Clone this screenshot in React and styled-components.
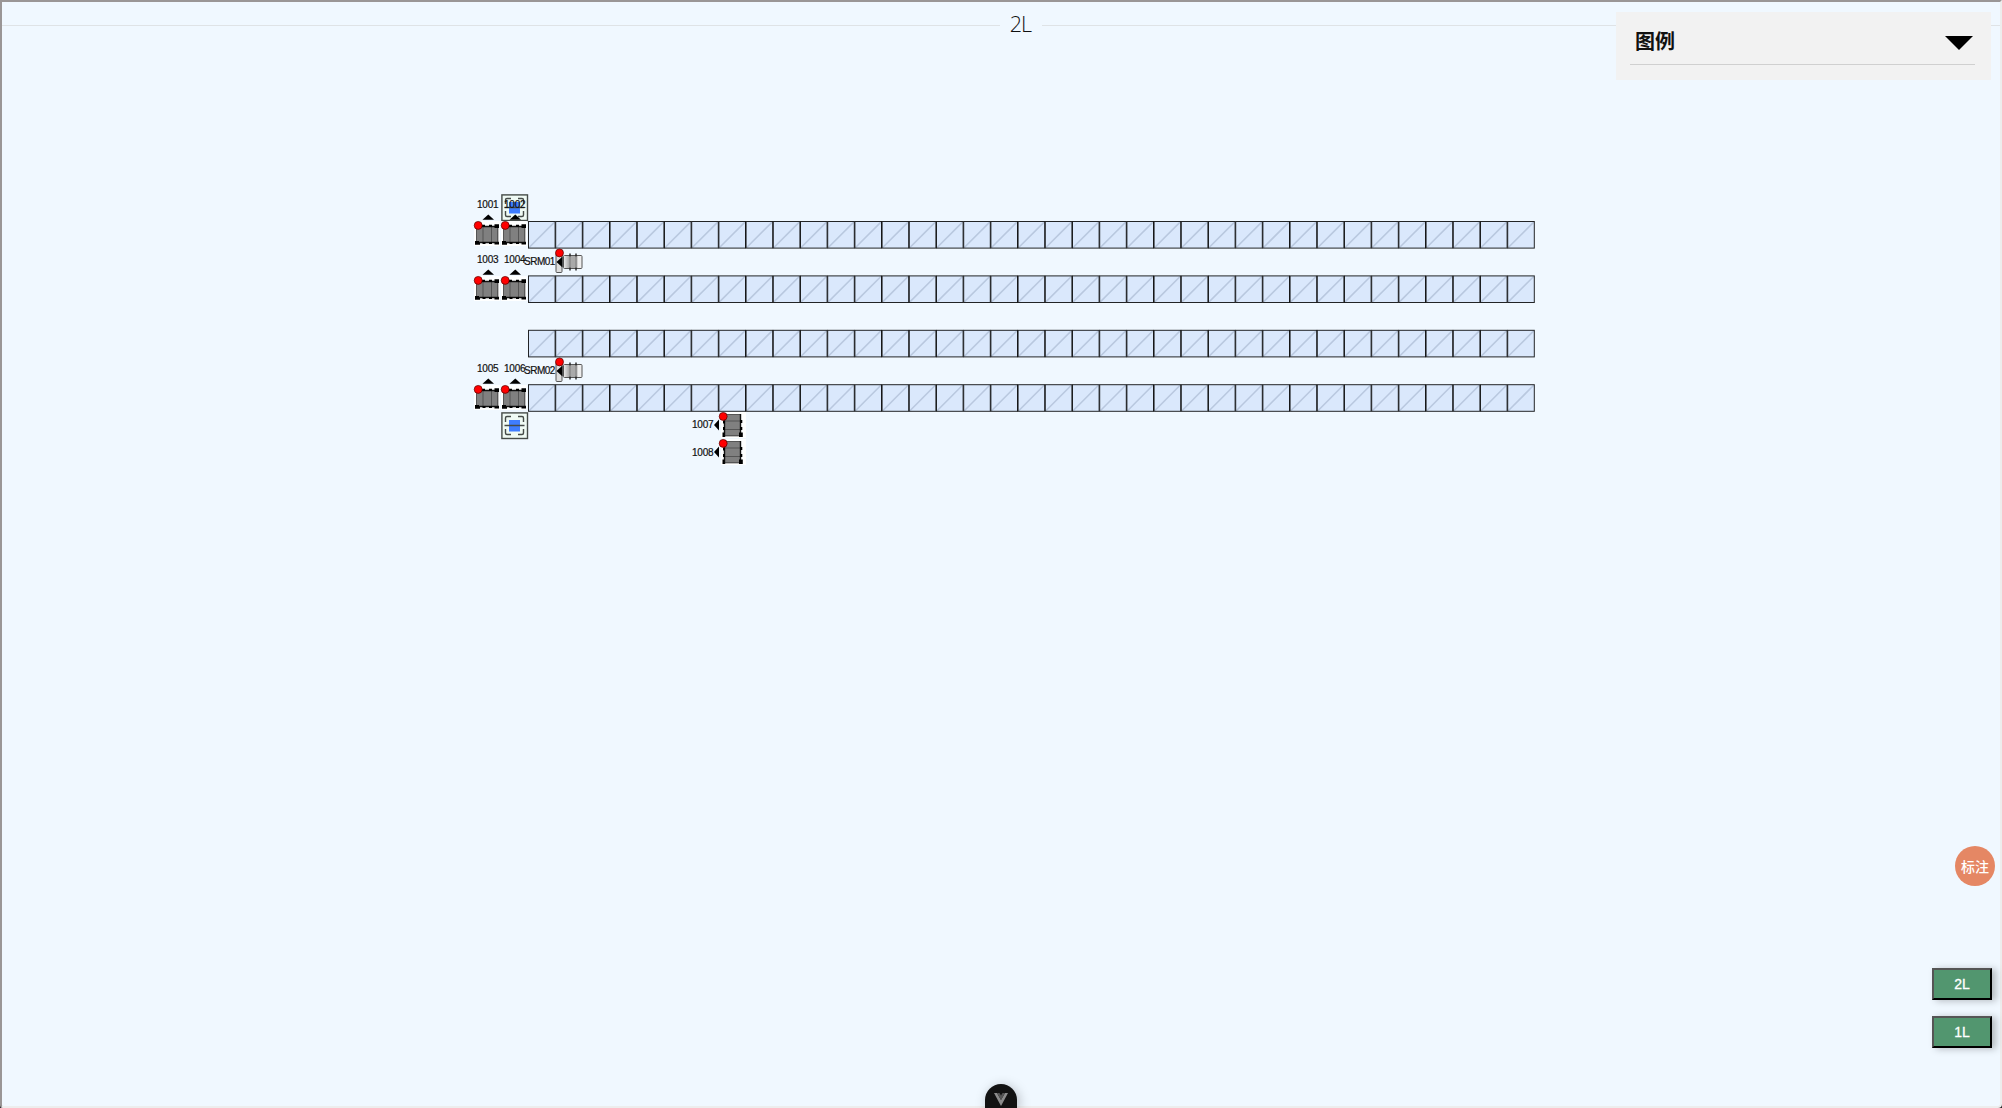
import React from "react";
import styled, { createGlobalStyle } from "styled-components";

const Global = createGlobalStyle`
  * { box-sizing: border-box; }
  html, body { margin: 0; height: 100%; overflow: hidden; background: #222; }
  #root { height: 100%; }
`;

const Frame = styled.main`
  position: relative;
  height: 100vh;
  border: 2px solid;
  border-color: #9a9696 #ededed #ededed #9a9696;
  border-bottom-right-radius: 4px;
  border-bottom-left-radius: 3px;
  background: #f0f8ff;
  font-family: "Liberation Sans", "Noto Sans CJK SC", sans-serif;
`;

const Divider = styled.header`
  display: flex;
  align-items: center;
  height: 47px;
`;

const Rule = styled.span`
  height: 1px;
  background: #dfe3e6;
  flex: ${(p) => p.$grow} 1 0;
`;

const FloorTitle = styled.h1`
  width: 42px;
  margin: 0;
  padding: 0 1px 4px 0;
  text-align: center;
  font: 300 21.5px/30px "Open Sans", "Noto Sans", sans-serif;
  letter-spacing: -0.8px;
  color: #111;
`;

const Node = styled.div`
  position: absolute;
  left: ${(p) => p.$x - 2}px;
  top: ${(p) => p.$y - 2}px;
  line-height: 0;
  svg { display: block; overflow: visible; }
`;

const Tag = styled.span`
  position: absolute;
  left: ${(p) => p.$x - 2}px;
  top: ${(p) => p.$y - 2}px;
  font-size: 10px;
  line-height: 11px;
  letter-spacing: ${(p) => (p.$wide ? -0.5 : -0.2)}px;
  color: #111;
  -webkit-text-stroke: 0.2px #111;
  white-space: nowrap;
`;

const Overlay = styled.aside`
  position: absolute;
  inset: 0;
  display: flex;
  flex-direction: column;
  align-items: flex-end;
  padding-top: 10px;
`;

const Legend = styled.section`
  width: 375px;
  height: 68px;
  margin-right: 9px;
  padding: 0 16px 0 14px;
  background: #f2f2f2;
`;

const LegendHead = styled.div`
  display: flex;
  align-items: center;
  justify-content: space-between;
  height: 53px;
  padding: 0 2px 0 5px;
  border-bottom: 1px solid #d0d0d0;
`;

const LegendTitle = styled.span`
  padding-top: 8px;
  font: 700 20px/28px "Liberation Sans", "Noto Sans CJK SC", sans-serif;
  color: #111;
`;

const Caret = styled.i`
  margin-top: 9px;
  border: 14px solid transparent;
  border-top-color: #000;
  border-bottom-width: 0;
`;

const NoteButton = styled.button`
  width: 40px;
  height: 40px;
  margin: 766px 5px 0 0;
  padding: 0;
  border: 0;
  border-radius: 50%;
  background: #e58764;
  color: #fff;
  font: 500 14px/40px "Noto Sans CJK SC", sans-serif;
`;

const FloorSwitch = styled.nav`
  display: grid;
  gap: 16px;
  margin: 82px 8px 0 0;
`;

const FloorButton = styled.button`
  width: 60px;
  height: 32px;
  padding: 0;
  border: 2px solid;
  border-color: #555 #000 #000 #555;
  background: #52966f;
  color: #fff;
  box-shadow: 4px 1px 7px rgba(0, 0, 0, 0.25);
  font: 400 14px/28px "Liberation Sans", sans-serif;
  -webkit-text-stroke: 0.3px #fff;
`;

const DevTab = styled.button`
  width: 32px;
  height: 24px;
  margin: auto auto -2px 983px;
  padding: 0 0 2px;
  border: 0;
  border-radius: 16px 16px 0 0;
  background: #121212;
  box-shadow: 2px 2px 12px rgba(0, 0, 0, 0.25);
  svg { display: block; margin: 9px auto 0; }
`;

const PITCH = 27.2;
const CELL = 26.6;

function Rack({ x, y, count = 37 }) {
  const bx = Math.floor(x);
  const by = Math.floor(y);
  return (
    <Node $x={bx} $y={by}>
      <svg width={1007} height={28}>
        {Array.from({ length: count }, (_, i) => {
          const cx = x - bx + i * PITCH;
          const cy = y - by;
          return (
            <g key={i}>
              <rect x={cx} y={cy} width={CELL} height={CELL} fill="#dae8fc" />
              <path d={`M${cx + 0.6} ${cy + CELL - 0.6}L${cx + CELL - 0.6} ${cy + 0.6}`} stroke="#b9c8df" strokeWidth="1.6" />
              <rect x={cx} y={cy} width={CELL} height={CELL} fill="none" stroke="#000" strokeOpacity="0.85" />
            </g>
          );
        })}
      </svg>
    </Node>
  );
}

function ConveyorArt() {
  return (
    <g>
      <rect width="26" height="25" fill="#fff" opacity=".9" />
      <rect x="2" y="6" width="22.5" height="16" fill="#808080" />
      <path d="M2.5 6V22M9 6V22M17.5 6V22M23.5 6V22" stroke="#4a4a4a" strokeWidth=".8" />
      <path d="M2 5.5H25M2 21.5H25" stroke="#111" strokeWidth="1.4" />
      <path d="M8 4.7h3M15 4.7h3M20.5 4.2h4.5M20.5 6h4.5M1 22.8h5M1 21h4M8.5 22h3M15 22h3M20.5 22.5h4.5" stroke="#000" strokeWidth="2" />
    </g>
  );
}

function Conveyor({ x, y, turned }) {
  return (
    <Node $x={x} $y={y}>
      <svg width="26" height="26">
        {turned ? (
          <g transform="translate(27 0) rotate(90)"><ConveyorArt /></g>
        ) : (
          <ConveyorArt />
        )}
        {turned ? <path d="M-5 13L0 7.5V18.5Z" /> : <path d="M8.5 -1.2H20L14.3 -6.5Z" />}
        <circle cx="4.2" cy="4.4" r="4" fill="#f00" stroke="#500" strokeWidth=".7" />
      </svg>
    </Node>
  );
}

function Crane({ x, y }) {
  return (
    <Node $x={x} $y={y}>
      <svg width="28" height="24">
        <defs>
          <linearGradient id="drum">
            <stop offset="0" stopColor="#eee" />
            <stop offset=".3" stopColor="#aaa" />
            <stop offset=".7" stopColor="#aaa" />
            <stop offset=".8" stopColor="#eee" />
          </linearGradient>
        </defs>
        <rect x="1" y="3" width="6" height="19.5" rx="1" fill="#ddd" stroke="#555" />
        <rect x="8.5" y="5.5" width="18.5" height="13" rx="1" fill="url(#drum)" stroke="#555" />
        <path d="M15 3.5V20.5M21 3.5V20.5" stroke="#222" strokeWidth="1.4" strokeDasharray="3 11 3" />
        <path d="M15 6V18M21 6V18" stroke="#777" strokeWidth=".9" />
        <path d="M1.5 12L7.500 6.5V17.5Z" />
        <circle cx="4.5" cy="2.9" r="4" fill="#f00" stroke="#500" strokeWidth=".7" />
      </svg>
    </Node>
  );
}

function Station({ x, y }) {
  return (
    <Node $x={x} $y={y}>
      <svg width="27" height="27">
        <rect x="0.9" y="0.9" width="25.6" height="25.6" fill="#effaf4" stroke="#454b48" strokeWidth="1.4" />
        <rect x="8" y="8" width="11" height="11.5" fill="#3f7dff" />
        <path d="M4.5 10V6Q4.5 4.5 6 4.5H10M17 4.5H21Q22.5 4.5 22.5 6V10M22.5 17V21Q22.5 22.5 21 22.5H17M10 22.5H6Q4.5 22.5 4.5 21V17M3.5 13.5H23.5" fill="none" stroke="#454b48" strokeWidth="1.4" />
      </svg>
    </Node>
  );
}

const racks = [221.5, 275.9, 330.3, 384.7];
const conveyors = [
  { x: 474, y: 221 }, { x: 501, y: 221 },
  { x: 474, y: 275.6 }, { x: 501, y: 275.6 },
  { x: 474, y: 384.6 }, { x: 501, y: 384.6 },
  { x: 719, y: 412, turned: true }, { x: 719, y: 439, turned: true },
];
const tags = [
  ["1001", 477, 199], ["1002", 504, 199], ["1003", 477, 254], ["1004", 504, 254],
  ["1005", 477, 363], ["1006", 504, 363], ["1007", 692, 419], ["1008", 692, 447],
  ["SRM01", 524, 256], ["SRM02", 524, 365],
];

export default function App() {
  return (
    <>
      <Global />
      <Frame>
        <Divider>
          <Rule $grow={998} />
          <FloorTitle>2L</FloorTitle>
          <Rule $grow={958} />
        </Divider>
        {racks.map((y) => <Rack key={y} x={528.5} y={y} />)}
        <Station x={501} y={194} />
        <Station x={501} y={412} />
        {conveyors.map((c) => <Conveyor key={`${c.x}-${c.y}`} {...c} />)}
        <Crane x={555} y={250} />
        <Crane x={555} y={359} />
        {tags.map(([t, x, y]) => <Tag key={t} $x={x} $y={y} $wide={t.length > 4}>{t}</Tag>)}
        <Overlay>
          <Legend>
            <LegendHead>
              <LegendTitle>图例</LegendTitle>
              <Caret />
            </LegendHead>
          </Legend>
          <NoteButton>标注</NoteButton>
          <FloorSwitch>
            <FloorButton>2L</FloorButton>
            <FloorButton>1L</FloorButton>
          </FloorSwitch>
          <DevTab aria-label="devtools">
            <svg width="14" height="13" viewBox="0 0 14 13">
              <path d="M0 0H3L7 7L11 0H14L7 13Z" fill="#8b8b8b" />
              <path d="M3 0H5.5L7 2.5L8.5 0H11L7 7Z" fill="#555" />
            </svg>
          </DevTab>
        </Overlay>
      </Frame>
    </>
  );
}
